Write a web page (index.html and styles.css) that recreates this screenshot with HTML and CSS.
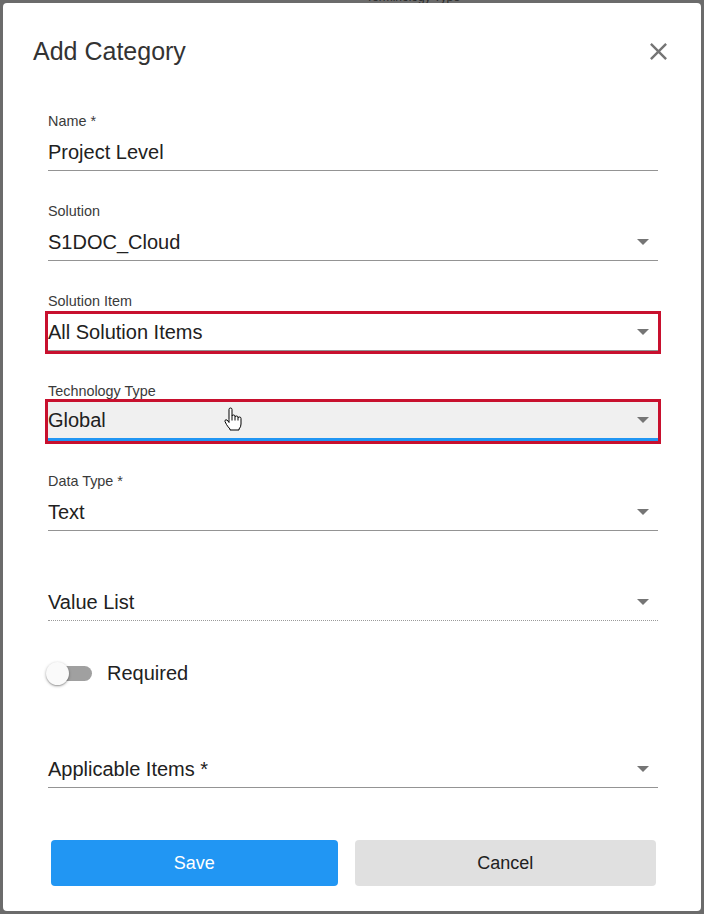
FILE: index.html
```html
<!DOCTYPE html>
<html lang="en">
<head>
<meta charset="utf-8">
<title>Add Category</title>
<link rel="stylesheet" href="styles.css">
</head>
<body>
<div class="backdrop-text">Terminology Type</div>
<div class="dialog">
  <div class="dialog-header">
    <h2 class="dialog-title">Add Category</h2>
    <button class="close-btn" type="button" aria-label="Close">
      <svg width="29" height="29" viewBox="0 0 24 24"><path d="M19 6.41L17.59 5 12 10.59 6.41 5 5 6.41 10.59 12 5 17.59 6.41 19 12 13.41 17.59 19 19 17.59 13.41 12z" fill="#757575"/></svg>
    </button>
  </div>

  <form class="form">
    <div class="field">
      <label class="field-label">Name *</label>
      <div class="input"><span class="input-value">Project Level</span></div>
    </div>
    <div class="field">
      <label class="field-label">Solution</label>
      <div class="input"><span class="input-value">S1DOC_Cloud</span><span class="caret"></span></div>
    </div>
    <div class="field">
      <label class="field-label">Solution Item</label>
      <div class="input is-flagged"><span class="input-value">All Solution Items</span><span class="caret"></span></div>
    </div>
    <div class="field">
      <label class="field-label">Technology Type</label>
      <div class="input is-flagged is-focused"><span class="input-value">Global</span><span class="caret"></span>
        <svg class="hand-cursor" width="18" height="24" viewBox="0 0 18 24"><path d="M5 12.5V2.5Q5 1 6.5 1T8 2.5V9Q8 8 9.5 8T11 9.5V10Q11 9 12.5 9T14 10.5V11Q14 10 15.5 10T17 11.5V17Q17 20 15 22V23H6V22Q4 20 2.5 17.5L1 14.5Q0.6 13 2 12.8Q3 12.8 4 14L5 15.5Z" fill="#fff" stroke="#000" stroke-width="1" stroke-linejoin="round"/><path d="M8 9V13.5M11 10V13.5M14 11V13.5" stroke="#000" stroke-width="1"/></svg>
      </div>
    </div>
    <div class="field">
      <label class="field-label">Data Type *</label>
      <div class="input"><span class="input-value">Text</span><span class="caret"></span></div>
    </div>
    <div class="field">
      <div class="input is-disabled"><span class="input-value">Value List</span><span class="caret"></span></div>
    </div>

    <div class="toggle-row">
      <span class="switch"><span class="switch-track"></span><span class="switch-thumb"></span></span>
      <span class="toggle-label">Required</span>
    </div>

    <div class="field">
      <div class="input"><span class="input-value">Applicable Items *</span><span class="caret"></span></div>
    </div>
  </form>

  <div class="actions">
    <button class="btn btn-primary" type="button">Save</button>
    <button class="btn btn-secondary" type="button">Cancel</button>
  </div>
</div>
</body>
</html>
```

FILE: styles.css
```css
* {
  box-sizing: border-box;
}

html, body {
  margin: 0;
  height: 100%;
}

body {
  background: #6b6b6b;
  padding: 3px;
  font-family: "Liberation Sans", Arial, sans-serif;
  position: relative;
  overflow: hidden;
}

.backdrop-text {
  position: absolute;
  top: -10px;
  left: 366px;
  font-size: 12px;
  color: #2a2a2a;
  z-index: 0;
}

.dialog {
  position: relative;
  z-index: 1;
  background: #fff;
  border-radius: 4px;
  height: 908px;
  padding: 33px 0 25px;
  display: flex;
  flex-direction: column;
}

.dialog-header {
  display: flex;
  align-items: center;
  justify-content: space-between;
  height: 30px;
  padding: 0 28px 0 30px;
}

.dialog-title {
  margin: 0;
  font-size: 25px;
  line-height: 30px;
  font-weight: normal;
  color: #333;
}

.close-btn {
  border: 0;
  background: none;
  padding: 0;
  width: 29px;
  height: 29px;
  display: flex;
}

.form {
  margin-top: 47px;
  padding: 0 43px 0 45px;
  display: flex;
  flex-direction: column;
  gap: 32px;
}

.field {
  height: 58px;
  display: flex;
  flex-direction: column;
  justify-content: flex-end;
}

.field-label {
  margin-bottom: auto;
  font-size: 14.4px;
  line-height: 16px;
  color: #3a3a3a;
}

.input {
  position: relative;
  height: 37px;
  padding: 6px 9px 0 0;
  border-bottom: 1px solid #949494;
  display: flex;
  align-items: flex-start;
}

.input-value {
  flex: 1;
  font-size: 20px;
  line-height: 24px;
  color: #212121;
  white-space: nowrap;
}

.caret {
  width: 0;
  height: 0;
  margin-top: 9px;
  border-left: 6px solid transparent;
  border-right: 6px solid transparent;
  border-top: 6px solid #757575;
}

.is-flagged {
  outline: 3px solid #c8102e;
}

.is-focused {
  height: 39px;
  background: #f0f0f0;
  border-bottom: 3px solid #2196f3;
}

.is-disabled {
  border-bottom: 1px dotted #9a9a9a;
}

.hand-cursor {
  position: absolute;
  left: 176px;
  top: 5px;
}

.toggle-row {
  display: flex;
  align-items: center;
  height: 45px;
  padding: 8px 0 13px;
}

.switch {
  position: relative;
  width: 46px;
  height: 24px;
  margin-left: -2px;
}

.switch-track {
  position: absolute;
  left: 10px;
  top: 4.5px;
  width: 36px;
  height: 15px;
  border-radius: 8px;
  background: #a0a0a0;
}

.switch-thumb {
  position: absolute;
  left: 0;
  top: 0.5px;
  width: 23px;
  height: 23px;
  border-radius: 50%;
  background: #fafafa;
  box-shadow: 0 1px 3px rgba(0, 0, 0, 0.35), 0 1px 1px rgba(0, 0, 0, 0.14);
}

.toggle-label {
  margin-left: 15px;
  font-size: 20px;
  line-height: 24px;
  color: #212121;
}

.actions {
  margin-top: auto;
  padding: 0 45px 0 48px;
  display: flex;
  gap: 17px;
}

.btn {
  flex: 1 1 auto;
  height: 46px;
  border: 0;
  border-radius: 4px;
  font-family: "Liberation Sans", Arial, sans-serif;
  font-size: 18px;
}

.btn-primary {
  background: #2196f3;
  color: #fff;
}

.btn-secondary {
  background: #e0e0e0;
  color: #212121;
}
```
